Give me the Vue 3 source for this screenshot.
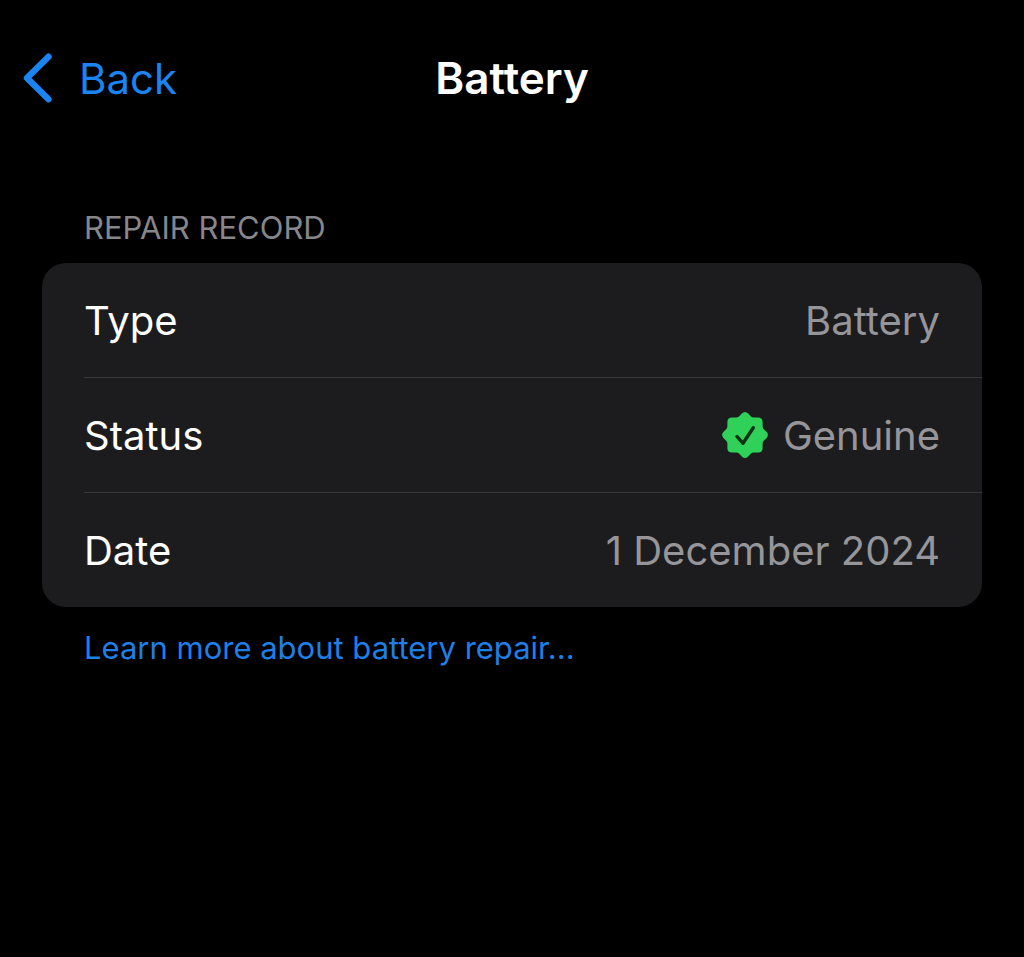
<script setup>
const rows = [
  { label: 'Type', value: 'Battery', verified: false },
  { label: 'Status', value: 'Genuine', verified: true },
  { label: 'Date', value: '1 December 2024', verified: false },
]
</script>

<template>
  <div class="screen">
    <header class="nav">
      <button class="back" type="button">
        <svg class="chevron" viewBox="0 0 30 50" aria-hidden="true">
          <path d="M25.5 3.7 L4 25 L25.5 46.3" />
        </svg>
        <span>Back</span>
      </button>
      <h1>Battery</h1>
    </header>
    <main>
      <h2>REPAIR RECORD</h2>
      <dl class="card">
        <div v-for="row in rows" :key="row.label" class="row">
          <dt>{{ row.label }}</dt>
          <dd>
            <svg v-if="row.verified" class="seal" viewBox="0 0 46 46" aria-hidden="true">
              <path class="seal-body" d="M19.8 1.6 Q23 -1.4 26.2 1.6 L29 4.4 Q30.2 5.4 31.8 5.4 L36 5.4 Q40.6 5.4 40.6 10 L40.6 14.2 Q40.6 15.8 41.6 17 L44.4 19.8 Q47.4 23 44.4 26.2 L41.6 29 Q40.6 30.2 40.6 31.8 L40.6 36 Q40.6 40.6 36 40.6 L31.8 40.6 Q30.2 40.6 29 41.6 L26.2 44.4 Q23 47.4 19.8 44.4 L17 41.6 Q15.8 40.6 14.2 40.6 L10 40.6 Q5.4 40.6 5.4 36 L5.4 31.8 Q5.4 30.2 4.4 29 L1.6 26.2 Q-1.4 23 1.6 19.8 L4.4 17 Q5.4 15.8 5.4 14.2 L5.4 10 Q5.4 5.4 10 5.4 L14.2 5.4 Q15.8 5.4 17 4.4 Z" />
              <path class="seal-check" d="M15 24.5 L21 31.3 L31.3 15.7" />
            </svg>
            <span>{{ row.value }}</span>
          </dd>
        </div>
      </dl>
      <a class="learn" href="#">Learn more about battery repair...</a>
    </main>
  </div>
</template>

<style>
body {
  margin: 0;
  background: #000;
}
</style>

<style scoped>
.screen {
  min-height: 100vh;
  box-sizing: border-box;
  padding-top: 40px;
  background: #000;
  color: #fff;
  font-family: Inter, "Liberation Sans", sans-serif;
}
.nav {
  display: grid;
  grid-template-columns: 1fr auto 1fr;
  align-items: center;
  height: 76px;
  padding: 0 23px;
}
.back {
  display: flex;
  align-items: center;
  justify-self: start;
  gap: 26px;
  padding: 0;
  border: 0;
  background: none;
  color: #1a84f0;
  font: inherit;
  font-size: 42px;
}
.chevron {
  width: 30px;
  height: 50px;
  fill: none;
  stroke: currentColor;
  stroke-width: 6.4;
  stroke-linecap: round;
  stroke-linejoin: round;
}
h1 {
  margin: 0;
  font-size: 44px;
  font-weight: 600;
}
main {
  padding: 94px 42px 0;
}
h2 {
  margin: 0 42px 17px;
  color: #86868b;
  font-size: 31px;
  font-weight: 400;
  line-height: 36px;
}
.card {
  margin: 0;
  border-radius: 24px;
  background: #1c1c1e;
  font-size: 40px;
}
.row {
  display: flex;
  align-items: center;
  justify-content: space-between;
  height: 114px;
  margin-left: 42px;
  padding-right: 42px;
}
.row + .row {
  border-top: 1px solid #38383a;
}
dd {
  display: flex;
  align-items: center;
  gap: 15px;
  margin: 0;
  color: #95959a;
}
.seal {
  width: 46px;
  height: 46px;
}
.seal-body {
  fill: #30d158;
}
.seal-check {
  fill: none;
  stroke: #0b3213;
  stroke-width: 3.4;
  stroke-linecap: round;
  stroke-linejoin: round;
}
.learn {
  display: block;
  width: fit-content;
  margin: 23px 42px 0;
  color: #1f7fe6;
  font-size: 31px;
  line-height: 36px;
  text-decoration: none;
}
</style>
